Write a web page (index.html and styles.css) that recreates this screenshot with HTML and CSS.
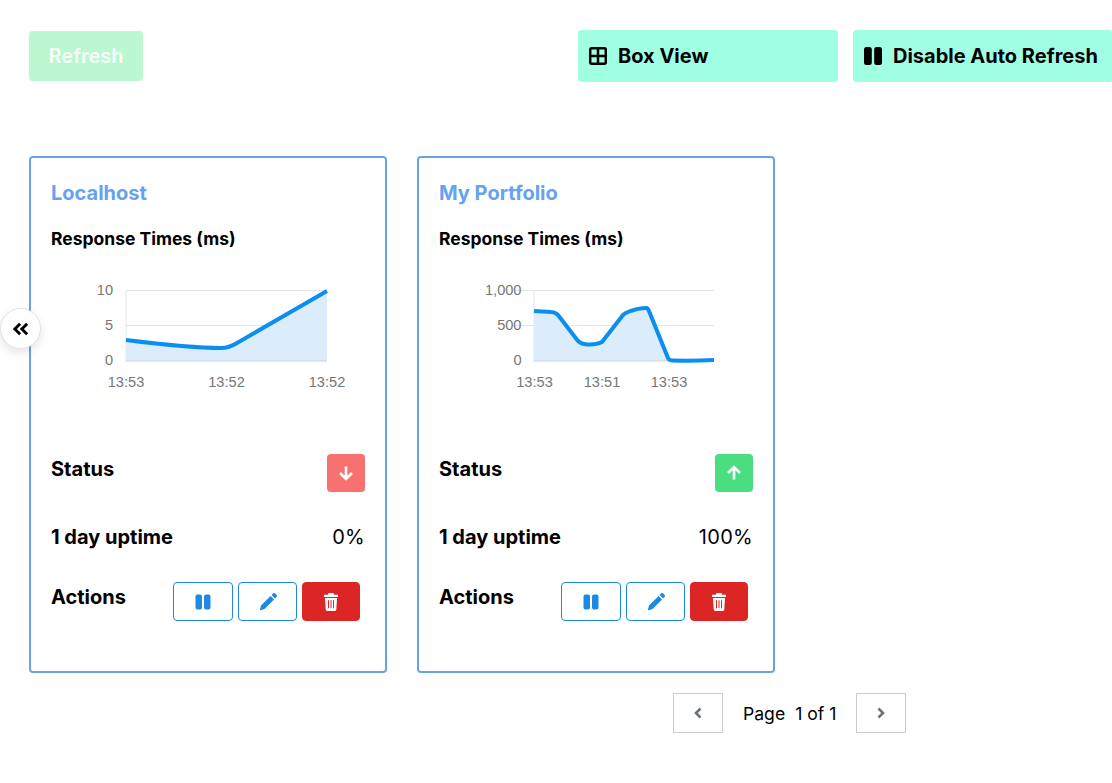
FILE: index.html
```html
<!DOCTYPE html>
<html lang="en">
<head>
<meta charset="utf-8">
<title>Monitors</title>
<link rel="stylesheet" href="styles.css">
</head>
<body>
<div class="page">
  <button class="collapse" aria-label="Collapse">
    <svg class="collapse-icon" viewBox="0 0 20 16"><path d="M9 2 3 8l6 6M17 2l-6 6 6 6"/></svg>
  </button>
  <header class="toolbar">
    <button class="refresh">Refresh</button>
    <div class="toolbar-right">
      <button class="mint">
        <svg class="mint-icon" viewBox="0 0 18 18"><rect class="grid-stroke" x="1.2" y="1.2" width="15.6" height="15.6" rx="1.5"/><path class="grid-stroke" d="M9 1.2v15.6M1.2 9h15.6"/></svg>
        Box View
      </button>
      <button class="mint">
        <svg class="mint-icon" viewBox="0 0 18 18"><rect x="0" y="0" width="7.800" height="18" rx="2.500"/><rect x="10.200" y="0" width="7.800" height="18" rx="2.500"/></svg>
        Disable Auto Refresh
      </button>
    </div>
  </header>

  <main class="cards">
    <article class="card">
      <h2 class="card-title">Localhost</h2>
      <h3 class="chart-title">Response Times (ms)</h3>
      <svg class="chart" viewBox="0 0 314 130">
        <path class="grid" d="M75 20.500H276M75 55.500H276"/>
        <path class="axis" d="M75 20V91"/>
        <path class="fill" d="M75 70C115 75 150 78 170 78Q178 78 186 73L276 21V91H75Z"/>
        <path class="axis-base" d="M75 91H276"/>
        <path class="line" d="M75 70C115 75 150 78 170 78Q178 78 186 73L276 21"/>
        <text class="tick" x="62" y="25" text-anchor="end">10</text>
        <text class="tick" x="62" y="60" text-anchor="end">5</text>
        <text class="tick" x="62" y="95" text-anchor="end">0</text>
        <text class="tick" x="75" y="117" text-anchor="middle">13:53</text>
        <text class="tick" x="175.500" y="117" text-anchor="middle">13:52</text>
        <text class="tick" x="276" y="117" text-anchor="middle">13:52</text>
      </svg>
      <div class="row status-row">
        <span class="label">Status</span>
        <span class="status down">
          <svg class="status-icon" viewBox="0 0 16 16"><path d="M8 1.500v12M2 8l6 6 6-6"/></svg>
        </span>
      </div>
      <div class="row">
        <span class="label">1 day uptime</span>
        <span class="value">0%</span>
      </div>
      <div class="row">
        <span class="label">Actions</span>
        <div class="actions">
          <button class="action action-pause"><svg class="action-icon" viewBox="0 0 16 16"><rect x="0.500" y="0.500" width="6.500" height="15" rx="2"/><rect x="9" y="0.500" width="6.500" height="15" rx="2"/></svg></button>
          <button class="action action-edit"><svg class="action-icon icon-edit" viewBox="0 0 16 16"><path d="M11.200 1.700 12.400.5a1.500 1.500 0 0 1 2.100 0l1 1a1.500 1.500 0 0 1 0 2.100l-1.200 1.200ZM10.300 2.600l3.100 3.100-8.500 8.500-4.200 1.300 1.100-4.400Z"/></svg></button>
          <button class="action action-delete"><svg class="action-icon icon-delete" viewBox="0 0 16 16" preserveAspectRatio="none"><path fill-rule="evenodd" d="M5.500 0h5l.7 1.500H15v2H1v-2h3.800ZM2 4.500h12l-.7 10.200a1.400 1.400 0 0 1-1.400 1.300H4.100a1.400 1.400 0 0 1-1.400-1.300ZM5 6.500v7h1v-7Zm2.500 0v7h1v-7Zm2.500 0v7h1v-7Z"/></svg></button>
        </div>
      </div>
    </article>

    <article class="card">
      <h2 class="card-title">My Portfolio</h2>
      <h3 class="chart-title">Response Times (ms)</h3>
      <svg class="chart" viewBox="0 0 314 130">
        <path class="grid" d="M75 20.500H275M75 55.500H275"/>
        <path class="axis" d="M95 20V91"/>
        <path class="fill" d="M95 41 112 42Q116 42 119 45L139 71Q142 74 148 74.500 157 75 163 72L184 45Q186 43 190 41.500 200 38 207 38 209 38 210 41L229 88Q230 90.500 234 90.500H275V91H95Z"/>
        <path class="axis-base" d="M95 91H275"/>
        <path class="line" d="M95 41 112 42Q116 42 119 45L139 71Q142 74 148 74.500 157 75 163 72L184 45Q186 43 190 41.500 200 38 207 38 209 38 210 41L229 88Q230 90.500 234 90.500 254 91 275 90"/>
        <text class="tick" x="82.500" y="25" text-anchor="end">1,000</text>
        <text class="tick" x="82.500" y="60" text-anchor="end">500</text>
        <text class="tick" x="82.500" y="95" text-anchor="end">0</text>
        <text class="tick" x="95.500" y="117" text-anchor="middle">13:53</text>
        <text class="tick" x="163" y="117" text-anchor="middle">13:51</text>
        <text class="tick" x="230" y="117" text-anchor="middle">13:53</text>
      </svg>
      <div class="row status-row">
        <span class="label">Status</span>
        <span class="status up">
          <svg class="status-icon" viewBox="0 0 16 16"><path d="M8 14.500v-12M2 8l6-6 6 6"/></svg>
        </span>
      </div>
      <div class="row">
        <span class="label">1 day uptime</span>
        <span class="value">100%</span>
      </div>
      <div class="row">
        <span class="label">Actions</span>
        <div class="actions">
          <button class="action action-pause"><svg class="action-icon" viewBox="0 0 16 16"><rect x="0.500" y="0.500" width="6.500" height="15" rx="2"/><rect x="9" y="0.500" width="6.500" height="15" rx="2"/></svg></button>
          <button class="action action-edit"><svg class="action-icon icon-edit" viewBox="0 0 16 16"><path d="M11.200 1.700 12.400.5a1.500 1.500 0 0 1 2.100 0l1 1a1.500 1.500 0 0 1 0 2.100l-1.200 1.200ZM10.300 2.600l3.100 3.100-8.500 8.500-4.200 1.300 1.100-4.400Z"/></svg></button>
          <button class="action action-delete"><svg class="action-icon icon-delete" viewBox="0 0 16 16" preserveAspectRatio="none"><path fill-rule="evenodd" d="M5.500 0h5l.7 1.500H15v2H1v-2h3.800ZM2 4.500h12l-.7 10.200a1.400 1.400 0 0 1-1.400 1.300H4.100a1.400 1.400 0 0 1-1.400-1.300ZM5 6.500v7h1v-7Zm2.500 0v7h1v-7Zm2.500 0v7h1v-7Z"/></svg></button>
        </div>
      </div>
    </article>
  </main>

  <nav class="pager">
    <button class="page-btn" aria-label="Previous"><svg class="page-icon" viewBox="0 0 10 12"><path d="M7.500 1.500 3 6l4.500 4.500"/></svg></button>
    <span class="page-word">Page</span>
    <span class="page-count">1 of 1</span>
    <button class="page-btn" aria-label="Next"><svg class="page-icon" viewBox="0 0 10 12"><path d="M2.500 1.500 7 6l-4.500 4.500"/></svg></button>
  </nav>
</div>
</body>
</html>
```

FILE: styles.css
```css
* { box-sizing: border-box; }
html, body { margin: 0; padding: 0; background: #fff; overflow: hidden; }
body { font-family: Inter, "Liberation Sans", sans-serif; color: #000; }
button { font-family: inherit; cursor: pointer; }
h2, h3 { margin: 0; }

.page { position: relative; width: 1112px; height: 783px; padding-top: 30px; overflow: hidden; }

.collapse {
  position: absolute; left: 0; top: 308px; width: 41px; height: 41px;
  padding: 0; border: 1px solid #e2e2e2; border-radius: 50%;
  background: #fff; box-shadow: 0 4px 10px rgba(0,0,0,.1);
  display: flex; align-items: center; justify-content: center; z-index: 2;
}
.collapse-icon { width: 18px; height: 14px; fill: none; stroke: #000; stroke-width: 3.400; }

.toolbar { display: flex; align-items: center; justify-content: space-between; padding-left: 29px; margin-right: -1px; }
.refresh {
  width: 114px; height: 50px; border: 0; border-radius: 4px; padding: 0;
  background: #bbf7d0; color: rgba(255,255,255,.9);
  font-size: 20px; font-weight: 600;
}
.toolbar-right { display: flex; gap: 15px; }
.mint {
  width: 260px; height: 52px; border: 0; border-radius: 4px;
  background: #a0ffe3; color: #000; padding: 0 0 0 11px;
  display: flex; align-items: center; gap: 11px;
  font-size: 20px; font-weight: 700; white-space: nowrap;
}
.mint-icon { width: 18px; height: 18px; flex: none; fill: #000; }
.grid-stroke { fill: none; stroke: #000; stroke-width: 2.500; }

.cards { display: flex; gap: 30px; padding-left: 29px; margin-top: 74px; }
.card {
  width: 358px; height: 517px; padding: 20px;
  border: 2px solid #6aa3e2; border-radius: 4px; background: #fff;
}
.card-title { font-size: 20px; line-height: 30px; font-weight: 700; color: #65a3f0; }
.chart-title { font-size: 17.500px; line-height: 24px; font-weight: 700; margin-top: 19px; }
.chart { display: block; width: 314px; height: 130px; margin-top: 19px; overflow: visible; }
.grid { fill: none; stroke: #e3e5ea; stroke-width: 1; }
.axis { fill: none; stroke: #e3e5ea; stroke-width: 1; }
.axis-base { fill: none; stroke: #cdd3dd; stroke-width: 1; }
.fill { fill: #dbecfd; stroke: none; }
.line { fill: none; stroke: #0a8ff0; stroke-width: 4; stroke-linejoin: round; }
.tick { font-family: "Liberation Sans", Arial, sans-serif; font-size: 14.600px; fill: #777; }

.row { display: flex; justify-content: space-between; align-items: flex-start; margin-top: 30px; }
.status-row { margin-top: 54px; }
.label { font-size: 20px; line-height: 30px; font-weight: 700; }
.value { font-size: 20px; line-height: 30px; letter-spacing: .3px; }
.status { width: 38px; height: 38px; border-radius: 4px; display: flex; align-items: center; justify-content: center; }
.status.down { background: #f87171; }
.status.up { background: #4ade80; }
.status-icon { width: 16px; height: 16px; fill: none; stroke: #fff; stroke-width: 2.600; }

.actions { display: flex; gap: 5px; margin-right: 5px; }
.action {
  height: 39px; border-radius: 4px; padding: 0; background: #fff;
  border: 1px solid #1e88e5; display: flex; align-items: center; justify-content: center;
  fill: #1e88e5;
}
.action-pause { width: 60px; }
.action-edit { width: 59px; }
.action-delete { width: 58px; background: #dc2626; border-color: #dc2626; fill: #fff; }
.action-icon { width: 16px; height: 16px; }
.icon-edit { width: 18px; height: 18px; }
.icon-delete { width: 16px; height: 18px; }

.pager { display: flex; align-items: center; margin-top: 20px; padding-left: 673px; font-size: 17.600px; }
.page-btn {
  width: 50px; height: 40px; padding: 0; background: #fff;
  border: 1px solid #ccc; display: flex; align-items: center; justify-content: center;
}
.page-icon { width: 10px; height: 12px; fill: none; stroke: #6b7280; stroke-width: 2.600; }
.page-word { margin-left: 20px; }
.page-count { margin-left: 10px; margin-right: 20px; }
```
